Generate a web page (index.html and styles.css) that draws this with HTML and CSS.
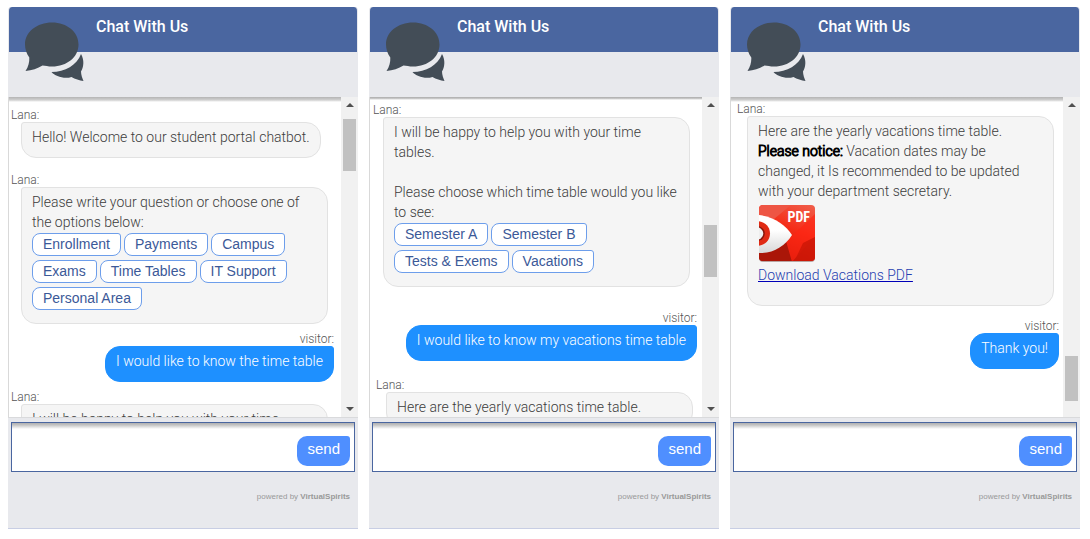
FILE: index.html
```html
<!DOCTYPE html>
<html lang="en">
<head>
<meta charset="utf-8">
<title>Chat With Us</title>
<link rel="stylesheet" href="styles.css">
</head>
<body>
<svg class="defs" aria-hidden="true">
  <symbol id="bubbles" viewBox="0 0 60 60">
    <path d="M27 .5C42 .5 53.500 10 53.500 22.500C53.500 35 42 44.500 27 44.500C23 44.500 20.500 43.800 17.500 43.500C12.500 46.500 7 48.500 .5 49C3.500 44.500 4.500 40 4.300 35.500C1.500 31.500 0 27 0 22.500C0 10 12 .5 27 .5Z"/>
    <path d="M56 32C59.500 38 58.800 45 56 49.500C56 53 57.500 56.500 58.500 59C54.500 58.500 50 57 46.500 55C39 57.500 30 54 26.500 50C40 50 52 43 56 32Z"/>
  </symbol>
</svg>
<main class="chats">
  <section class="chat">
    <header class="chat-header">
      <svg class="logo" aria-hidden="true"><use href="#bubbles"/></svg>
      <h2 class="title">Chat With Us</h2>
    </header>
    <div class="log">
      <div class="messages first">
        <p class="who">Lana:</p>
        <div class="bubble">Hello! Welcome to our student portal chatbot.</div>
        <p class="who gap-l">Lana:</p>
        <div class="bubble">Please write your question or choose one of the options below:
          <div class="options">
            <button class="chip">Enrollment</button><button class="chip">Payments</button><button class="chip">Campus</button><button class="chip">Exams</button><button class="chip">Time Tables</button><button class="chip">IT Support</button><button class="chip">Personal Area</button>
          </div>
        </div>
        <p class="who visitor gap-s">visitor:</p>
        <div class="bubble own">I would like to know the time table</div>
        <p class="who gap-s">Lana:</p>
        <div class="bubble">I will be happy to help you with your time tables.</div>
      </div>
      <div class="scrollbar" aria-hidden="true"><i class="arrow up"></i><i class="thumb top"></i><i class="arrow down"></i></div>
    </div>
    <form class="composer">
      <input class="entry" type="text" aria-label="Message">
      <button class="send" type="button">send</button>
    </form>
    <footer class="powered">powered by <b>VirtualSpirits</b></footer>
  </section>

  <section class="chat">
    <header class="chat-header">
      <svg class="logo" aria-hidden="true"><use href="#bubbles"/></svg>
      <h2 class="title">Chat With Us</h2>
    </header>
    <div class="log">
      <div class="messages second">
        <p class="who">Lana:</p>
        <div class="bubble">I will be happy to help you with your time tables.<br><br>Please choose which time table would you like to see:
          <div class="options">
            <button class="chip">Semester A</button><button class="chip">Semester B</button><button class="chip">Tests &amp; Exems</button><button class="chip">Vacations</button>
          </div>
        </div>
        <p class="who visitor gap-xl">visitor:</p>
        <div class="bubble own">I would like to know my vacations time table</div>
        <div class="next">
          <p class="who gap-next">Lana:</p>
          <div class="bubble wide">Here are the yearly vacations time table.</div>
        </div>
      </div>
      <div class="scrollbar" aria-hidden="true"><i class="arrow up"></i><i class="thumb middle"></i><i class="arrow down"></i></div>
    </div>
    <form class="composer">
      <input class="entry" type="text" aria-label="Message">
      <button class="send" type="button">send</button>
    </form>
    <footer class="powered">powered by <b>VirtualSpirits</b></footer>
  </section>

  <section class="chat">
    <header class="chat-header">
      <svg class="logo" aria-hidden="true"><use href="#bubbles"/></svg>
      <h2 class="title">Chat With Us</h2>
    </header>
    <div class="log">
      <div class="messages third">
        <p class="who">Lana:</p>
        <div class="bubble file">Here are the yearly vacations time table.<br><b>Please notice:</b> Vacation dates may be changed, it Is recommended to be updated with your department secretary.
          <svg class="pdf" viewBox="0 0 58 58" role="img" aria-label="PDF">
            <defs>
              <linearGradient id="red" x1="1" y1="0" x2=".6" y2="1"><stop offset="0" stop-color="#f0604c"/><stop offset=".5" stop-color="#f52c18"/><stop offset="1" stop-color="#c41404"/></linearGradient>
              <linearGradient id="white" x1="0" y1="0" x2="0" y2="1"><stop offset=".4" stop-color="#fff"/><stop offset="1" stop-color="#d8d8d8"/></linearGradient>
              <clipPath id="tile"><rect x="1" y="0" width="56" height="56" rx="4"/></clipPath>
            </defs>
            <rect x="1" y="1" width="56" height="56" rx="4" fill="#b9a5a2"/>
            <g clip-path="url(#tile)">
              <rect width="58" height="58" fill="url(#red)"/>
              <path d="M0 0H33L16 14Q9 11 0 10Z" fill="#ee5544"/>
              <path d="M34 31L57 9V31L34 57H10Z" fill="#ff2412" opacity=".6"/>
              <path d="M57 32V57H36L45 38Z" fill="#cc1606" opacity=".8"/>
              <path d="M0 48Q16 47 28 36L34 57H0Z" fill="#aa1608"/>
              <path d="M0 10C15 11 28 20 34 30C27 41 15 49 0 48Z" fill="url(#white)"/>
              <path d="M0 16C16 18 16 39 0 41Z" fill="#e02a14"/>
              <path d="M0 21C9 23 9 34 0 36Z" fill="#86160b"/>
              <path d="M0 22C7 25 7 32 0 35Z" fill="#eee"/>
            </g>
            <text x="52" y="17" text-anchor="end" class="pdf-label">PDF</text>
          </svg>
          <a class="download" href="#">Download Vacations PDF</a>
        </div>
        <p class="who visitor gap-m">visitor:</p>
        <div class="bubble own">Thank you!</div>
      </div>
      <div class="scrollbar" aria-hidden="true"><i class="arrow up"></i><i class="thumb bottom"></i></div>
    </div>
    <form class="composer">
      <input class="entry" type="text" aria-label="Message">
      <button class="send" type="button">send</button>
    </form>
    <footer class="powered">powered by <b>VirtualSpirits</b></footer>
  </section>
</main>
</body>
</html>
```
FILE: styles.css
```css
* { box-sizing: border-box; }
body {
  margin: 0;
  background: #fff;
  font: 300 14px/20px Roboto, sans-serif;
  color: #3c3c3c;
}
.defs { display: none; }
.chats {
  display: grid;
  grid-template-columns: repeat(3, minmax(0, 1fr));
  gap: 11px;
  height: 100vh;
  padding: 7px 10px 10px 8px;
}
.chat {
  display: flex;
  flex-direction: column;
  min-height: 0;
  background: #e8e9ed;
  border-bottom: 1px solid #c8cee4;
  border-radius: 4px 4px 0 0;
}
.chat-header {
  display: flex;
  flex: none;
  gap: 11px;
  height: 90px;
  padding: 0 16px;
  border: solid #e8e9ed;
  border-width: 0 1px;
  border-radius: 4px 4px 0 0;
  background: linear-gradient(#4a66a0 45px, #e8e9ed 45px);
}
.logo {
  width: 60px;
  height: 60px;
  margin-top: 15px;
  fill: #434d57;
}
.title {
  margin: 10px 0 0;
  font-size: 16px;
  font-weight: 500;
  line-height: 20px;
  color: #fff;
}
.log {
  display: flex;
  flex: 1;
  min-height: 0;
  border-bottom: 1px solid #d9dadc;
}
.messages {
  display: flex;
  flex: 1;
  flex-direction: column;
  align-items: flex-start;
  min-width: 0;
  overflow: hidden;
  border-left: 1px solid #d9d9d9;
  background: linear-gradient(#b4b4b4, #d0d0d0 3px, #fff 5px);
}
.messages > * { flex: none; }
.first { padding: 11px 7px 0 2px; }
.second { padding: 6px 5px 0 3px; background: linear-gradient(#b4b4b4 1px, #fff 3px); }
.third { padding: 5px 4px 0 6px; }
.who {
  margin: 0;
  font-size: 12px;
  line-height: 14px;
  color: #555;
}
.visitor { align-self: flex-end; }
.gap-s { margin-top: 8px; }
.gap-m { margin-top: 13px; }
.gap-l { margin-top: 15px; }
.gap-next { margin-top: 17px; }
.gap-xl { margin-top: 24px; }
.next { margin-left: 3px; }
.bubble {
  max-width: 307px;
  margin-left: 10px;
  padding: 4px 10px 10px;
  border: 1px solid #e2e2e2;
  border-radius: 3px 15px 15px 15px;
  background: #f5f5f5;
}
.wide { width: 307px; }
.bubble b {
  font-weight: 300;
  color: #000;
  -webkit-text-stroke: 1px #000;
}
.own {
  align-self: flex-end;
  border-color: #1e90ff;
  border-radius: 15px 3px 15px 15px;
  background: #1e90ff;
  color: #fff;
}
.file { padding-bottom: 20px; }
.options {
  display: flex;
  flex-wrap: wrap;
  gap: 4px 3px;
  padding: 1px 0 3px;
}
.chip {
  height: 23px;
  padding: 0 10px 2px;
  border: 1px solid #6d9eeb;
  border-radius: 8px 3px 8px 8px;
  background: #fff;
  font: 14px/20px "Liberation Sans", Arial, sans-serif;
  color: #3b5998;
}
.pdf {
  display: block;
  width: 58px;
  height: 58px;
  margin: 4px 0 2px;
}
.pdf-label {
  font: bold 14px "Liberation Sans Narrow", "Roboto Condensed", Roboto, sans-serif;
  fill: #fff;
}
.download { color: #2540b0; text-decoration-color: #0000b8; }
.scrollbar {
  position: relative;
  flex: none;
  width: 17px;
  background: #f1f1f1;
}
.thumb {
  position: absolute;
  left: 2px;
  width: 13px;
  height: 52px;
  background: #c1c1c1;
}
.top { top: 7%; }
.middle { top: 40%; }
.bottom { top: 81%; height: 45px; }
.arrow {
  position: absolute;
  left: 5px;
  border: 4px solid transparent;
}
.up { top: 2px; border-bottom-color: #505050; }
.down { bottom: 2px; border-top-color: #505050; }
.composer {
  display: flex;
  flex: none;
  align-items: center;
  height: 50px;
  margin: 4px 3px 0;
  padding: 7px 4px 0 8px;
  border: 1px solid #4a66a0;
  background: linear-gradient(#b0b0b0, #c4c4c4 2px, #fff 6px);
}
.entry {
  flex: 1;
  min-width: 0;
  height: 30px;
  border: 0;
  outline: 0;
  background: none;
  font: inherit;
}
.send {
  height: 30px;
  padding: 0 10px 4px;
  border: 0;
  border-radius: 10px 3px 10px 10px;
  background: #4f8fff;
  font: 15px/20px "Liberation Sans", Arial, sans-serif;
  color: #fff;
}
.powered {
  flex: none;
  height: 56px;
  padding: 19px 8px 0;
  font: 8px/12px "Liberation Sans", Arial, sans-serif;
  color: #999;
  text-align: right;
}
```
